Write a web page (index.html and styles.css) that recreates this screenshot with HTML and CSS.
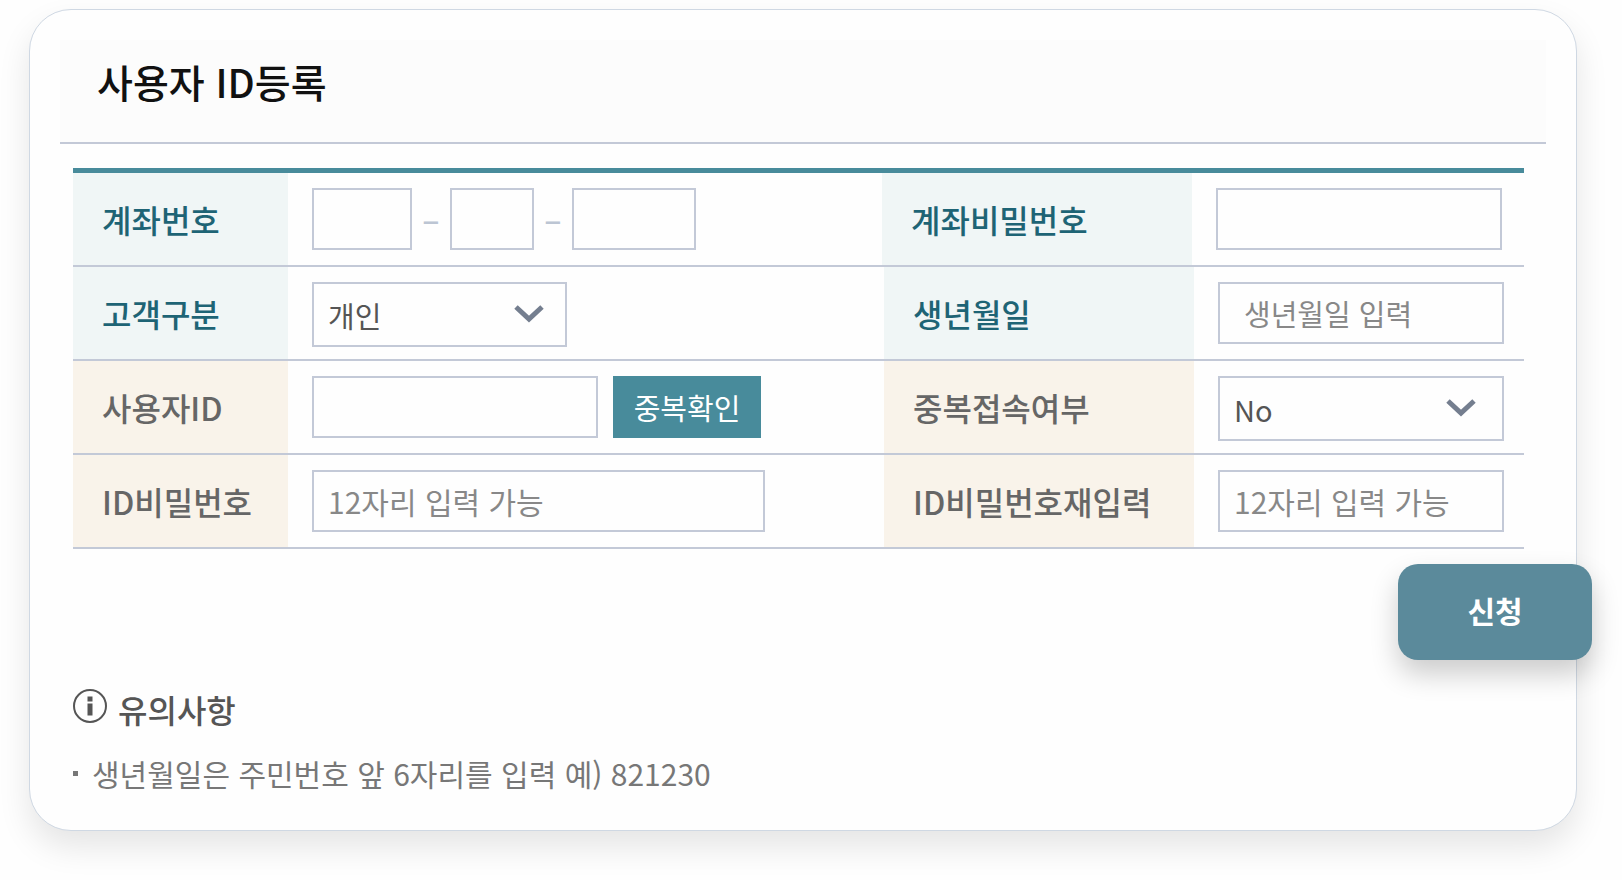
FILE: index.html
```html
<!DOCTYPE html>
<html lang="ko">
<head>
<meta charset="utf-8">
<meta name="viewport" content="width=device-width, initial-scale=1">
<title>사용자 ID등록</title>
<link rel="stylesheet" href="styles.css">
</head>
<body>
<main class="card">
  <header class="card-header">
    <h1 class="title">사용자 ID등록</h1>
  </header>
  <form class="form">
    <div class="rows">
      <div class="row row-account">
        <label class="label label-teal" for="account1">계좌번호</label>
        <div class="field account">
          <input class="box account-a" id="account1" type="text">
          <span class="dash">–</span>
          <input class="box account-b" type="text" aria-label="계좌번호 둘째 자리">
          <span class="dash">–</span>
          <input class="box account-c" type="text" aria-label="계좌번호 셋째 자리">
        </div>
        <label class="label label-teal" for="accountPw">계좌비밀번호</label>
        <div class="field"><input class="box box-side" id="accountPw" type="password"></div>
      </div>
      <div class="row">
        <label class="label label-teal" for="customer">고객구분</label>
        <div class="field">
          <div class="select-wrap select-customer">
            <select class="select" id="customer"><option>개인</option></select>
            <svg class="chevron" viewBox="0 0 30 18" aria-hidden="true"><path d="M2 2 15 14 28 2"/></svg>
          </div>
        </div>
        <label class="label label-teal" for="birth">생년월일</label>
        <div class="field"><input class="box box-side box-birth" id="birth" type="text" placeholder="생년월일 입력"></div>
      </div>
      <div class="row">
        <label class="label label-sand" for="userId">사용자ID</label>
        <div class="field user-id">
          <input class="box box-side" id="userId" type="text">
          <button class="check" type="button">중복확인</button>
        </div>
        <label class="label label-sand" for="multi">중복접속여부</label>
        <div class="field">
          <div class="select-wrap select-multi">
            <select class="select" id="multi"><option>No</option></select>
            <svg class="chevron" viewBox="0 0 30 18" aria-hidden="true"><path d="M2 2 15 14 28 2"/></svg>
          </div>
        </div>
      </div>
      <div class="row">
        <label class="label label-sand" for="idPw">ID비밀번호</label>
        <div class="field"><input class="box box-wide box-password" id="idPw" type="password" placeholder="12자리 입력 가능"></div>
        <label class="label label-sand" for="idPw2">ID비밀번호재입력</label>
        <div class="field"><input class="box box-side box-password" id="idPw2" type="password" placeholder="12자리 입력 가능"></div>
      </div>
    </div>
    <div class="actions"><button class="submit" type="submit">신청</button></div>
  </form>
  <section class="notice">
    <h2 class="notice-title">
      <svg class="info" viewBox="0 0 34 34" aria-hidden="true"><circle cx="17" cy="17" r="16"/><path d="M14.500 7.500h5v5h-5zM14.500 14.500h5v12h-5z"/></svg>
      유의사항
    </h2>
    <ul class="notes">
      <li class="note">생년월일은 주민번호 앞 6자리를 입력 예) 821230</li>
    </ul>
  </section>
</main>
</body>
</html>
```
FILE: styles.css
```css
* { box-sizing: border-box; }
body {
  margin: 0;
  padding: 9px 45px 49px 29px;
  background: #fefefe;
  color: #555;
  font-family: "Noto Sans CJK KR", sans-serif;
}
input, select, button { font: inherit; }
.card {
  padding: 30px 30px 36px;
  border: 1px solid #cfd8e3;
  border-radius: 42px;
  background: #fefefe;
  box-shadow: 0 16px 32px rgba(0, 0, 0, 0.1);
}
.card-header {
  height: 104px;
  padding: 11px 37px;
  border-bottom: 2px solid #c3c9d7;
  background: #fcfcfc;
}
.title {
  margin: 0;
  color: #111;
  font-size: 39px;
  font-weight: 500;
  line-height: 60px;
}
.form { margin: 24px 22px 0 13px; }
.rows { border-top: 5px solid #488b9b; }
.row {
  display: grid;
  grid-template-columns: 215px 1fr 310px 330px;
  height: 94px;
  border-bottom: 2px solid #c3c9d7;
}
.row-account { grid-template-columns: 215px 1fr 310px 332px; }
.label {
  padding: 0 29px;
  font-size: 32px;
  font-weight: 500;
  line-height: 92px;
  white-space: nowrap;
}
.label-teal { background: #f0f6f6; color: #1e6475; }
.label-sand { background: #f9f3ea; color: #666; }
.field { padding: 15px 24px 0; }
.box {
  display: block;
  height: 62px;
  padding: 0 14px;
  border: 2px solid #c3c9d7;
  border-radius: 0;
  background: #fefefe;
  color: #555;
  font-size: 29px;
}
.box::placeholder { color: #888; opacity: 1; }
.box-side { width: 286px; }
.box-wide { width: 453px; }
.box-birth { padding-left: 24px; }
.box-password { font-size: 30px; }
.account, .user-id { display: flex; }
.account-a { width: 100px; }
.account-b { width: 84px; }
.account-c { width: 124px; }
.dash {
  width: 38px;
  color: #bcc5d3;
  font-size: 32px;
  font-weight: 500;
  line-height: 60px;
  text-align: center;
}
.user-id { gap: 15px; }
.check {
  width: 148px;
  height: 62px;
  padding: 0;
  border: 0;
  background: #488b9b;
  color: #fff;
  font-size: 29px;
}
.select-wrap { position: relative; }
.select-customer { width: 255px; }
.select-multi { width: 286px; }
.select {
  appearance: none;
  display: block;
  width: 100%;
  height: 65px;
  padding: 0 14px;
  border: 2px solid #c3c9d7;
  border-radius: 0;
  background: #fefefe;
  color: #555;
  font-size: 29px;
}
.chevron {
  position: absolute;
  top: 23px;
  right: 23px;
  width: 30px;
  height: 18px;
  fill: none;
  stroke: #747e8f;
  stroke-width: 5;
  pointer-events: none;
}
.select-multi .chevron { right: 28px; }
.actions {
  display: flex;
  justify-content: flex-end;
  margin: 15px -68px 0 0;
}
.submit {
  width: 194px;
  height: 96px;
  padding: 0 0 4px;
  border: 0;
  border-radius: 20px;
  background: #5b8a9b;
  box-shadow: 0 14px 28px rgba(0, 0, 0, 0.2);
  color: #fff;
  font-size: 30px;
  font-weight: 700;
}
.notice { margin: 26px 13px 0; }
.notice-title {
  display: flex;
  align-items: flex-start;
  gap: 11px;
  margin: 0;
  font-size: 32px;
  font-weight: 500;
  line-height: 46px;
}
.info {
  width: 34px;
  height: 34px;
  margin-top: 3px;
  fill: #555;
}
.info circle { fill: none; stroke: #555; stroke-width: 2; }
.notes {
  margin: 20px 0 0;
  padding: 0;
  list-style: none;
}
.note {
  display: flex;
  align-items: center;
  gap: 14px;
  color: #777;
  font-size: 30px;
  line-height: 42px;
}
.note::before {
  content: "";
  width: 5px;
  height: 5px;
  background: #777;
}
```
